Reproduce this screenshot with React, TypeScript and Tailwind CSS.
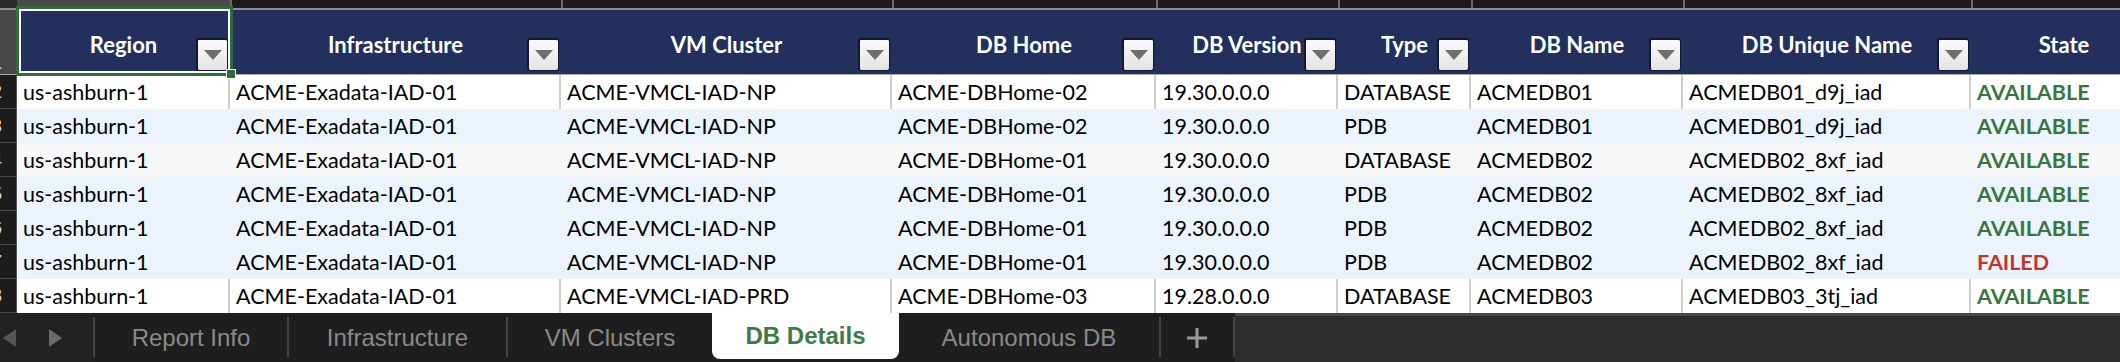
import React from 'react'

interface Column {
  label: string
  width: string
  filter: boolean
}

const columns: Column[] = [
  { label: 'Region', width: 'w-[213px]', filter: true },
  { label: 'Infrastructure', width: 'w-[331px]', filter: true },
  { label: 'VM Cluster', width: 'w-[331px]', filter: true },
  { label: 'DB Home', width: 'w-[264px]', filter: true },
  { label: 'DB Version', width: 'w-[182px]', filter: true },
  { label: 'Type', width: 'w-[133px]', filter: true },
  { label: 'DB Name', width: 'w-[212px]', filter: true },
  { label: 'DB Unique Name', width: 'w-[288px]', filter: true },
  { label: 'State', width: 'w-[186px]', filter: false },
]

const rows = [
  ['us-ashburn-1', 'ACME-Exadata-IAD-01', 'ACME-VMCL-IAD-NP', 'ACME-DBHome-02', '19.30.0.0.0', 'DATABASE', 'ACMEDB01', 'ACMEDB01_d9j_iad', 'AVAILABLE'],
  ['us-ashburn-1', 'ACME-Exadata-IAD-01', 'ACME-VMCL-IAD-NP', 'ACME-DBHome-02', '19.30.0.0.0', 'PDB', 'ACMEDB01', 'ACMEDB01_d9j_iad', 'AVAILABLE'],
  ['us-ashburn-1', 'ACME-Exadata-IAD-01', 'ACME-VMCL-IAD-NP', 'ACME-DBHome-01', '19.30.0.0.0', 'DATABASE', 'ACMEDB02', 'ACMEDB02_8xf_iad', 'AVAILABLE'],
  ['us-ashburn-1', 'ACME-Exadata-IAD-01', 'ACME-VMCL-IAD-NP', 'ACME-DBHome-01', '19.30.0.0.0', 'PDB', 'ACMEDB02', 'ACMEDB02_8xf_iad', 'AVAILABLE'],
  ['us-ashburn-1', 'ACME-Exadata-IAD-01', 'ACME-VMCL-IAD-NP', 'ACME-DBHome-01', '19.30.0.0.0', 'PDB', 'ACMEDB02', 'ACMEDB02_8xf_iad', 'AVAILABLE'],
  ['us-ashburn-1', 'ACME-Exadata-IAD-01', 'ACME-VMCL-IAD-NP', 'ACME-DBHome-01', '19.30.0.0.0', 'PDB', 'ACMEDB02', 'ACMEDB02_8xf_iad', 'FAILED'],
  ['us-ashburn-1', 'ACME-Exadata-IAD-01', 'ACME-VMCL-IAD-PRD', 'ACME-DBHome-03', '19.28.0.0.0', 'DATABASE', 'ACMEDB03', 'ACMEDB03_3tj_iad', 'AVAILABLE'],
]

// fill per data row; null means no fill, so the gridlines show through
const rowFills: (string | null)[] = [
  null,
  'bg-[#ebf3fc]',
  'bg-[#f5f7f9]',
  'bg-[#ebf3fc]',
  'bg-[#ebf3fc]',
  'bg-[#ebf3fc]',
  null,
]

export default function App() {
  return (
    <div className="w-[2120px] h-[362px] overflow-hidden bg-[#1c1c1c] flex flex-col" style={{ fontFamily: 'Lato, "Open Sans", sans-serif' }}>
      <div className="relative flex flex-col shrink-0">
        {/* Column letters strip (scrolled off) */}
        <div className="flex h-[8px] shrink-0">
          <div className="w-[17px] shrink-0 bg-[#2b2b2b]" />
          {columns.map((col, i) => (
            <div
              key={col.label}
              className={`${col.width} shrink-0 ${i === 0 ? 'bg-[#4a4a4a]' : 'bg-[#1b1b1b] border-l-2 border-[#6a6a6a]'}`}
            />
          ))}
        </div>
        <div className="h-[2px] bg-[#8e8e8e] shrink-0" />

        {/* Header row */}
        <div className="flex h-[64px] shrink-0">
          <RowNumber n={1} selected />
          {columns.map((col) => (
            <div key={col.label} className={`${col.width} shrink-0 relative bg-[#232f5c] flex items-center justify-center pt-[5px]`}>
              <span className="text-white font-bold text-[22px] whitespace-nowrap">{col.label}</span>
              {col.filter && <FilterButton />}
            </div>
          ))}
        </div>
        <div className="h-[1px] bg-[#a8a8a8] shrink-0" />

        {/* selection frame on A1 */}
        <div className="absolute left-[16px] top-[6px] w-[217px] h-[70px] border-[3px] border-[#2f6b3b]">
          <div className="w-full h-full border-2 border-white" />
        </div>
        <div className="absolute left-[226px] top-[69px] w-[10px] h-[10px] bg-[#2f6b3b] border border-white" />
      </div>

      {/* Data rows */}
      <div className="flex flex-col shrink-0">
        {rows.map((row, r) => {
          const fill = rowFills[r]
          return (
            <div key={r} className="flex h-[34px] shrink-0">
              <RowNumber n={r + 2} />
              {row.map((value, c) => {
                const isState = c === columns.length - 1
                const stateColor = value === 'FAILED' ? 'text-[#c4342c]' : 'text-[#38763e]'
                return (
                  <div
                    key={c}
                    className={`${columns[c].width} shrink-0 flex items-center pl-[6px] overflow-hidden whitespace-nowrap text-[21.5px] ${fill ?? 'bg-white'} ${!fill && !isState ? 'border-r-2 border-[#cfcfcf]' : ''} ${isState ? `font-bold ${stateColor}` : 'text-black'}`}
                  >
                    {value}
                  </div>
                )
              })}
            </div>
          )
        })}
      </div>

      {/* Sheet tabs */}
      <div className="flex h-[49px] shrink-0 bg-[#1e1e1e]" style={{ fontFamily: '"Liberation Sans", Arial, sans-serif' }}>
        <div className="w-[93px] shrink-0 flex items-center gap-[33px] pl-[3px] bg-[#222222]">
          <svg width="13" height="18" viewBox="0 0 13 18">
            <polygon points="13,0 13,18 0,9" fill="#555555" />
          </svg>
          <svg width="13" height="18" viewBox="0 0 13 18">
            <polygon points="0,0 0,18 13,9" fill="#6a6a6a" />
          </svg>
        </div>
        <Divider />
        <Tab label="Report Info" width="w-[192px]" />
        <Divider />
        <Tab label="Infrastructure" width="w-[217px]" />
        <Divider />
        <Tab label="VM Clusters" width="w-[204px]" />
        <div className="w-[187px] shrink-0 h-[46px] bg-white rounded-b-[8px] flex items-center justify-center">
          <span className="text-[24px] font-bold text-[#3b7a49]">DB Details</span>
        </div>
        <Tab label="Autonomous DB" width="w-[260px]" />
        <Divider />
        <div className="w-[72px] shrink-0 flex items-center justify-center">
          <svg width="20" height="20" viewBox="0 0 20 20">
            <rect x="8.5" y="0" width="3" height="20" fill="#9a9a9a" />
            <rect x="0" y="8.5" width="20" height="3" fill="#9a9a9a" />
          </svg>
        </div>
        <Divider />
        <div className="flex-1 bg-[#2c2c2c] border-t-[3px] border-[#474747]" />
      </div>
    </div>
  )
}

function RowNumber({ n, selected = false }: { n: number; selected?: boolean }) {
  return (
    <div
      className={`w-[17px] shrink-0 overflow-hidden flex justify-end pr-[14px] border-r border-[#555555] ${selected ? 'bg-[#474747] items-end pb-[2px]' : 'bg-[#1c1c1c] items-center border-b border-b-[#4a4a4a]'}`}
    >
      <span className="text-[19px] text-[#d6d6d6] leading-none" style={{ fontFamily: '"Liberation Sans", Arial, sans-serif' }}>{n}</span>
    </div>
  )
}

function FilterButton() {
  return (
    <div className="absolute right-[2px] top-[28px] w-[32px] h-[33px] rounded-[3px] border-l-2 border-t-2 border-r border-b border-[#121830] bg-linear-to-b from-[#fbfbfb] to-[#e3e3e3] flex items-center justify-center">
      <svg width="18" height="10" viewBox="0 0 18 10">
        <polygon points="0,0 18,0 9,10" fill="#6e6e6e" />
      </svg>
    </div>
  )
}

function Divider() {
  return <div className="w-[2px] h-[40px] mt-[4px] shrink-0 bg-[#444444]" />
}

function Tab({ label, width }: { label: string; width: string }) {
  return (
    <div className={`${width} shrink-0 flex items-center justify-center`}>
      <span className="text-[24px] text-[#8a8a8a] whitespace-nowrap">{label}</span>
    </div>
  )
}
